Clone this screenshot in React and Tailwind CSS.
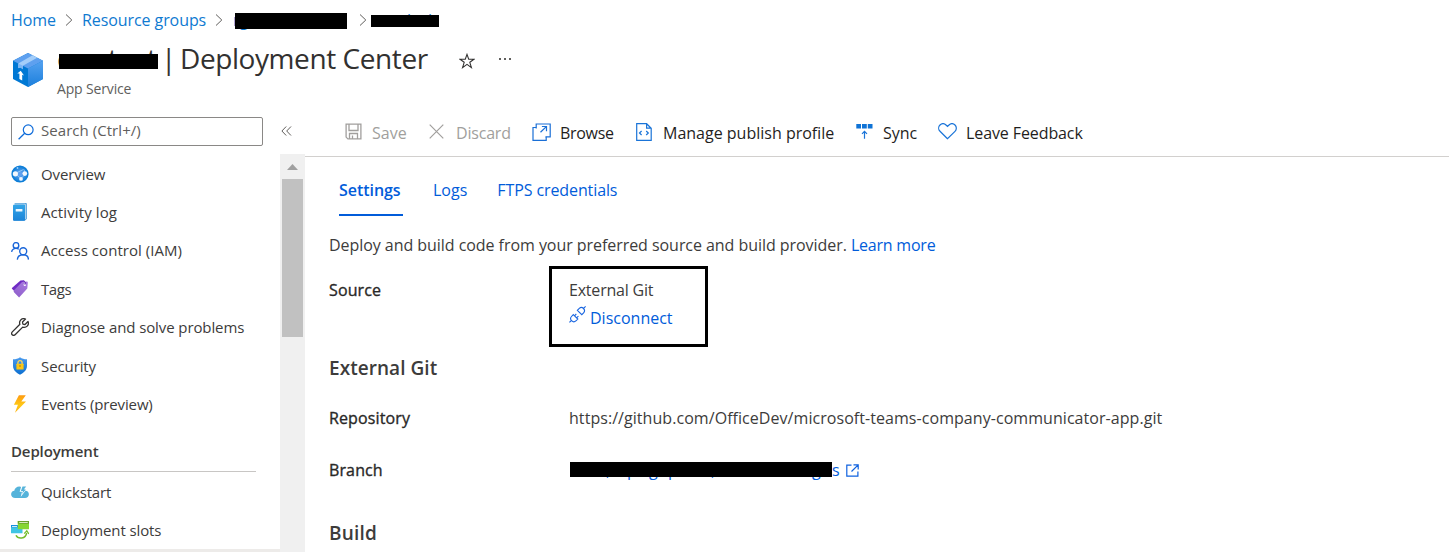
function Svg({ box = '0 0 18 18', className = 'h-[18px] w-[18px]', children }) {
  return (
    <svg viewBox={box} className={`block shrink-0 ${className}`} fill="none">
      {children}
    </svg>
  );
}

function ServiceIcon() {
  return (
    <Svg box="0 0 30 34" className="h-[34px] w-[30px]">
      <defs>
        <linearGradient id="boxRight" x1="0" y1="0" x2="0" y2="1">
          <stop offset="0" stopColor="#55a2f0" />
          <stop offset="1" stopColor="#1b7fdc" />
        </linearGradient>
      </defs>
      <path d="M15 0 30 7.7V26L15 34 0 26V7.7Z" fill="#0078d4" />
      <path d="M30 7.7V26L15 34V15.4Z" fill="url(#boxRight)" />
      <path d="M15 0 30 7.7 15 15.4 0 7.7Z" fill="#5ea0ef" />
      <path d="M19.6 2.3 24.2 4.7 9.9 12.7 9.7 16.3 7.6 14.4 5.3 15 5.3 10.4Z" fill="#a3cdf9" />
      <path d="M5.3 10.4 9.9 12.7V16.3L7.6 14.6 5.3 15.3Z" fill="#7db6f5" />
      <path d="M7.7 17.8 11 22.4 9.2 21.8V27.5L6.4 26V20.6L4.3 20.6Z" fill="#fff" />
    </Svg>
  );
}

function StarIcon() {
  return (
    <Svg box="0 0 16 16" className="h-4 w-4">
      <path d="M8 1.4 9.7 6.2H15L10.8 9.3 12.4 14.6 8 11.4 3.6 14.6 5.2 9.3 1 6.2H6.3Z" stroke="#323130" strokeWidth="1.1" />
    </Svg>
  );
}

function ChevronIcon() {
  return (
    <Svg box="0 0 8 14" className="h-[14px] w-2">
      <path d="M1 1.5 6.8 7 1 12.5" stroke="#605e5c" strokeWidth="1" />
    </Svg>
  );
}

function SearchIcon() {
  return (
    <Svg box="0 0 16 16" className="h-4 w-4">
      <circle cx="10.2" cy="5.8" r="4.9" stroke="#0f6cda" strokeWidth="1.2" />
      <path d="M6.7 9.3.6 15.2" stroke="#0f6cda" strokeWidth="1.3" />
    </Svg>
  );
}

function OverviewIcon() {
  return (
    <Svg>
      <defs>
        <radialGradient id="globe">
          <stop offset="0.2" stopColor="#5ea0ef" />
          <stop offset="1" stopColor="#0078d4" />
        </radialGradient>
      </defs>
      <circle cx="9" cy="9" r="8.6" fill="url(#globe)" />
      <path d="M4 8.5 12.5 4.5M4 8.5 10 13.5M13 4.5 14.5 9 10 13.5" stroke="#9fd0fa" strokeWidth="0.8" />
      <circle cx="4.4" cy="8.8" r="2.6" fill="#f2f7fd" />
      <circle cx="13.8" cy="8.6" r="2.4" fill="#f2f7fd" />
      <circle cx="10" cy="13.9" r="1.9" fill="#f2f7fd" />
      <circle cx="6.5" cy="3" r="0.9" fill="#9fd0fa" />
    </Svg>
  );
}

function LogIcon() {
  return (
    <Svg>
      <defs>
        <linearGradient id="book" x1="0" y1="0" x2="0" y2="1">
          <stop offset="0" stopColor="#32a5e8" />
          <stop offset="1" stopColor="#1b84d8" />
        </linearGradient>
      </defs>
      <path d="M3.6.2H15.6V16L14 17.6H3Z" fill="#0f7acb" />
      <path d="M3 1.2H14.3V16.4" stroke="#e7f4fd" strokeWidth="0.9" />
      <rect x="2" y="1.7" width="11.9" height="16" rx="0.7" fill="url(#book)" />
      <rect x="4.7" y="6" width="6.7" height="2.6" rx="0.4" fill="#eef7fe" />
    </Svg>
  );
}

function AccessIcon() {
  return (
    <Svg>
      <g stroke="#1a66d9" strokeWidth="1.4">
        <circle cx="5" cy="3.4" r="2.8" />
        <path d="M.6 9.8C1.2 7.6 2.8 6.4 5 6.4 6.2 6.4 7 6.7 7.8 7.3" />
        <circle cx="12.2" cy="9.2" r="3.5" />
        <path d="M6.3 17.6C6.7 14.5 9 12.8 12.2 12.8 15.4 12.8 17.3 14.5 17.5 17.6" />
      </g>
    </Svg>
  );
}

function TagIcon() {
  return (
    <Svg>
      <defs>
        <linearGradient id="tag" x1="1" y1="0" x2="0.2" y2="1">
          <stop offset="0" stopColor="#a97be0" />
          <stop offset="1" stopColor="#8f5fcb" />
        </linearGradient>
      </defs>
      <path d="M9.5.6 13.3.2 12.8 2 3.8 11.5.9 8.8Q.7 8.2 1.2 7.7Z" fill="#6f2bc4" />
      <path d="M11 1.9 15.9 1.6Q16.9 1.7 16.8 2.8L16.3 8.5 8.1 17.5 3 12.2Q2.3 11.2 3 10.3Z" fill="url(#tag)" />
      <circle cx="13.8" cy="4.7" r="1.2" fill="#fff" />
      <path d="M13 .8Q15.5 2.5 13.9 4.8" stroke="#5b1fa8" strokeWidth="0.9" />
    </Svg>
  );
}

function WrenchIcon() {
  return (
    <Svg>
      <path d="M14.5 1C12.7.3 10.6.8 9.4 2.3 8.5 3.5 8.4 5 8.9 6.3L1.3 13.9C.4 14.8.4 16 1.2 16.8 2 17.6 3.2 17.6 4.1 16.7L11.7 9.1C13.2 9.6 15 9.3 16.2 8.1 17.4 6.9 17.7 5 17 3.5L14 6.5 11.9 6.1 11.5 4Z" stroke="#323130" strokeWidth="1.3" strokeLinejoin="round" />
    </Svg>
  );
}

function ShieldIcon() {
  return (
    <Svg>
      <defs>
        <linearGradient id="shield" x1="0" y1="0" x2="0" y2="1">
          <stop offset="0" stopColor="#4a9bee" />
          <stop offset="1" stopColor="#0b6fd0" />
        </linearGradient>
      </defs>
      <path d="M9 .2C11 1.6 13 2.2 16 2.3V8.8C16 13.5 12.5 15.8 9 17.8 5.5 15.8 2 13.5 2 8.8V2.3C5 2.2 7 1.6 9 .2Z" fill="url(#shield)" />
      <path d="M6.9 7V5.7C6.9 3 11.1 3 11.1 5.7V7" stroke="#ffd75a" strokeWidth="1.3" />
      <rect x="5.4" y="6.7" width="7.2" height="5.8" rx="0.5" fill="#fbc615" />
      <circle cx="9" cy="9" r="0.8" fill="#a5740a" />
    </Svg>
  );
}

function BoltIcon() {
  return (
    <Svg>
      <defs>
        <linearGradient id="bolt" x1="0" y1="0" x2="0" y2="1">
          <stop offset="0" stopColor="#fe9a11" />
          <stop offset="0.55" stopColor="#ffc814" />
          <stop offset="1" stopColor="#fdb414" />
        </linearGradient>
      </defs>
      <path d="M7.9.2H14.8L10.3 6.4H15L4 17.8 6.9 9.8H2.9Z" fill="url(#bolt)" />
    </Svg>
  );
}

function QuickstartIcon() {
  return (
    <Svg>
      <path d="M4.2 15C1.8 15 .1 13.5.1 11.3.1 9.3 1.5 7.9 3.3 7.7 3.6 5 5.8 3.4 8.3 3.4 10 3.4 11.2 4.1 12 5.3L14.5 7.7C16.6 7.9 17.9 9.3 17.9 11.3 17.9 13.5 16.3 15 14 15Z" fill="#55b3da" />
      <path d="M10.3 3.3 8.6 8.8H11L9.7 14 14.6 7.4H12.4L15.6 3.3Z" fill="#fff" />
      <path d="M11.5 3.6H15.2L12.8 6.6H14.8L10.9 11 12 8H9.9Z" fill="#55b3da" />
    </Svg>
  );
}

function SlotsIcon() {
  return (
    <Svg>
      <rect x="0" y="4" width="11.5" height="8.3" rx="0.4" fill="#3fc4e4" />
      <rect x="0" y="4" width="7" height="2.3" fill="#1490df" />
      <rect x="1" y="5" width="5" height="0.8" fill="#fff" />
      <rect x="6.8" y="0" width="11.2" height="8.3" rx="0.4" fill="#86d633" />
      <rect x="6.8" y="0" width="11.2" height="2.7" fill="#6a9f2b" />
      <rect x="8.2" y="1" width="8.6" height="0.9" fill="#e4f4d2" />
      <path d="M5 14.3C6.8 18.2 14.9 18.3 15.6 11.8" stroke="#76bc2d" strokeWidth="1.5" />
      <path d="M13.2 12.6 15.8 9.8 17.9 13" stroke="#76bc2d" strokeWidth="1.2" />
    </Svg>
  );
}

function SaveIcon() {
  return (
    <Svg box="0 0 17 17" className="mb-1 h-[17px] w-[17px]">
      <path d="M1.1 1.1H15.9V15.9H2.9L1.1 14.1ZM4 1.1V7.5H13V1.1M4.5 15.9V10.5H12.5V15.9M7.5 12.5V15.9" stroke="#a19f9d" strokeWidth="1.3" />
    </Svg>
  );
}

function DiscardIcon() {
  return (
    <Svg box="0 0 15 15" className="mb-1 h-[15px] w-[15px]">
      <path d="M.7.7 14.3 14.3M14.3.7.7 14.3" stroke="#a19f9d" strokeWidth="1.2" />
    </Svg>
  );
}

function BrowseIcon() {
  return (
    <Svg box="0 0 19 18" className="mb-[3px] h-[18px] w-[19px]">
      <g stroke="#1a6fd6" strokeWidth="1.2">
        <path d="M4.2 4.5H1V17.3H14.2V13.8" />
        <path d="M8.5 9.3V3.5H4.2V13.8M4.2 3.5V1H8.5M8.5 .4V3.5M8.5 1H18.2V13.8H13.5" strokeWidth="0" />
        <path d="M4.2 5.5V1H18.2V13.8H13.5" />
        <path d="M8.5 9.3 14.3 3.6M9.9 3.5H14.5V8.2" />
      </g>
    </Svg>
  );
}

function ProfileIcon() {
  return (
    <Svg box="0 0 16 18" className="mb-[3px] h-[18px] w-4">
      <path d="M.7.7H10.6L15.2 5.2V17.3H.7ZM10.6.7V5.2H15.2" stroke="#1a74d8" strokeWidth="1.2" />
      <path d="M5.6 8 3.5 10 5.6 12M10.2 8 12.3 10 10.2 12" stroke="#1a74d8" strokeWidth="1.2" />
    </Svg>
  );
}

function SyncIcon() {
  return (
    <Svg box="0 0 17 16" className="mb-1 h-4 w-[17px]">
      <path d="M.3 1H5V5.5H.3ZM6 1H10.8V5.5H6ZM11.8 1H16.5V5.5H11.8Z" fill="#0f73d6" />
      <path d="M8.5 15.8V8.6M6 10.8 8.5 8.3 11 10.8" stroke="#1a74d8" strokeWidth="1.2" />
    </Svg>
  );
}

function HeartIcon() {
  return (
    <Svg box="0 0 19 17" className="mb-1 h-[17px] w-[19px]">
      <path d="M9.5 15.7 2 8.3C.2 6.5.3 3.7 2 2 3.7.4 6.3.4 8 2L9.5 3.5 11 2C12.7.4 15.3.4 17 2 18.7 3.7 18.8 6.5 17 8.3Z" stroke="#1a74d8" strokeWidth="1.2" />
    </Svg>
  );
}

function PlugIcon() {
  return (
    <Svg box="0 0 17 17" className="h-[17px] w-[17px]">
      <g stroke="#1a66e0" strokeWidth="1.1">
        <path d="M.4 16.4 2.4 14.5M4.3 8.6 8.8 13.1 6.9 14.9C5.7 16 3.8 15.9 2.6 14.7 1.4 13.5 1.4 11.7 2.5 10.5ZM5.5 9.8 7.3 8M7.6 11.9 9.4 10.1" />
        <path d="M16.6.4 14.6 2.4M8.4 4.3 12.8 8.7 14.6 6.8C15.7 5.6 15.7 3.7 14.5 2.5 13.3 1.3 11.5 1.3 10.3 2.4Z" />
      </g>
    </Svg>
  );
}

function ExternalIcon() {
  return (
    <Svg box="0 0 13 13" className="h-[13px] w-[13px]">
      <path d="M5.5 1.1H.8V12.2H11.9V7.5M7.5.8H12.2V5.5M12.2.8 5.5 7.5" stroke="#0f62e0" strokeWidth="1.2" />
    </Svg>
  );
}

const navItems = [
  { label: 'Overview', Icon: OverviewIcon, text: 'tracking-[-0.1px]' },
  { label: 'Activity log', Icon: LogIcon, text: 'tracking-[0.1px]' },
  { label: 'Access control (IAM)', Icon: AccessIcon, text: 'tracking-[0.05px]' },
  { label: 'Tags', Icon: TagIcon, text: 'tracking-[-0.4px]' },
  { label: 'Diagnose and solve problems', Icon: WrenchIcon, text: 'tracking-[-0.1px]' },
  { label: 'Security', Icon: ShieldIcon, text: 'tracking-[-0.1px]' },
  { label: 'Events (preview)', Icon: BoltIcon, text: 'tracking-[-0.13px]' },
];

const deploymentItems = [
  { label: 'Quickstart', Icon: QuickstartIcon, text: 'tracking-[-0.2px]' },
  { label: 'Deployment slots', Icon: SlotsIcon, text: 'tracking-[-0.1px]' },
];

function NavItem({ label, Icon, text = '' }) {
  return (
    <li className="flex h-[38.4px] items-center gap-3 pl-[11px]">
      <Icon />
      <span className={`text-[15px] ${text}`}>{label}</span>
    </li>
  );
}

function Sidebar() {
  return (
    <aside className="flex w-[305px] shrink-0 flex-col">
      <div className="flex h-[44px] shrink-0 items-start pt-[7px] pl-[11px]">
        <div className="flex h-[29px] w-[252px] items-center gap-[7px] rounded-[2px] border border-[#8a8886] pl-1.5">
          <SearchIcon />
          <span className="mb-0.5 text-[15px] tracking-[0.05px] text-[#605e5c]">Search (Ctrl+/)</span>
        </div>
        <Svg box="0 0 11 10" className="mt-[9px] ml-[18px] h-2.5 w-[11px]">
          <path d="M5.2.5.9 5 5.2 9.5M10 .5 5.7 5 10 9.5" stroke="#605e5c" strokeWidth="1" />
        </Svg>
      </div>
      <div className="flex min-h-0 flex-1">
        <div className="flex w-[280px] flex-col overflow-hidden border-b-[3px] border-[#edebe9] pt-[0.65px]">
          <ul>
            {navItems.map((item) => (
              <NavItem key={item.label} {...item} />
            ))}
          </ul>
          <h2 className="mr-6 ml-[11px] flex h-[48.4px] shrink-0 items-center border-b border-[#c8c6c4] pt-[8.4px] text-[15px] font-semibold tracking-[-0.13px]">
            Deployment
          </h2>
          <ul className="pt-px">
            {deploymentItems.map((item) => (
              <NavItem key={item.label} {...item} />
            ))}
          </ul>
        </div>
        <div className="flex w-[25px] flex-col items-center bg-[#f0f0f0] pt-[10px]">
          <Svg box="0 0 11 6" className="h-1.5 w-[11px]">
            <path d="M0 6 5.5 0 11 6Z" fill="#a0a0a0" />
          </Svg>
          <div className="mt-[9px] h-[158px] w-[21px] bg-[#c1c1c1]" />
        </div>
      </div>
    </aside>
  );
}

function Toolbar() {
  return (
    <div className="flex h-[47px] shrink-0 items-center border-b border-[#d2d0ce] text-[16px] text-[#1f1e1d]">
      <div className="flex w-[84px] items-center gap-[10px] pl-10 text-[#a19f9d]">
        <SaveIcon />
        <span>Save</span>
      </div>
      <div className="ml-10 flex w-[103px] items-center gap-3 text-[#a19f9d]">
        <DiscardIcon />
        <span className="tracking-[-0.2px]">Discard</span>
      </div>
      <div className="flex w-[104px] items-center gap-[9px]">
        <BrowseIcon />
        <span className="tracking-[-0.3px]">Browse</span>
      </div>
      <div className="flex w-[220px] items-center gap-[11px]">
        <ProfileIcon />
        <span>Manage publish profile</span>
      </div>
      <div className="flex w-[82px] items-center gap-[10px]">
        <SyncIcon />
        <span>Sync</span>
      </div>
      <div className="flex items-center gap-[9px]">
        <HeartIcon />
        <span className="tracking-[-0.1px]">Leave Feedback</span>
      </div>
    </div>
  );
}

function Tabs() {
  return (
    <div className="flex h-[59px] shrink-0 items-stretch gap-[30px] pl-[34px] text-[16px] leading-[66px] text-[#015cda]">
      <span className="w-16 border-b-2 border-[#015cda] font-semibold tracking-[-0.05px]">Settings</span>
      <span>Logs</span>
      <span className="tracking-[-0.1px]">FTPS credentials</span>
    </div>
  );
}

function Label({ children }) {
  return (
    <div className="w-60 shrink-0 tracking-[0.12px] text-[#292827] [-webkit-text-stroke:0.35px_#292827]">{children}</div>
  );
}

function BranchLink() {
  return (
    <span className="flex items-center gap-[6px] text-[#015cda]">
      <span className="relative flex">
        <span className="w-[37px]" />
        <span className="w-[21px]">,</span>
        <span className="w-[22px]">p</span>
        <span className="w-[19px]">g</span>
        <span className="w-[43px]">p</span>
        <span className="w-[101px]">,</span>
        <span className="w-[20px]">g</span>
        <span className="w-2">s</span>
        <span className="absolute top-1 left-px h-[15px] w-[262px] bg-black" />
      </span>
      <ExternalIcon />
    </span>
  );
}

function Content() {
  return (
    <div className="flex flex-col pl-6 text-[16px] leading-6 text-[#3d3c3b]">
      <p className="mt-[17px] tracking-[-0.05px]">
        Deploy and build code from your preferred source and build provider.{' '}
        <a className="tracking-[-0.22px] text-[#015cda]">Learn more</a>
      </p>
      <div className="mt-[9px] flex h-[81px]">
        <div className="pt-3">
          <Label>Source</Label>
        </div>
        <div className="-ml-5 flex w-[159px] flex-col gap-1 border-[3px] border-black pt-[9px] pl-[17px]">
          <span className="tracking-[-0.2px]">External Git</span>
          <a className="flex items-start gap-1 text-[#015cda]">
            <PlugIcon />
            <span>Disconnect</span>
          </a>
        </div>
      </div>
      <h3 className="mt-[9px] text-[19px] font-semibold tracking-[0.05px]">External Git</h3>
      <div className="mt-[26px] flex">
        <Label>Repository</Label>
        <span className="tracking-[0.055px]">https://github.com/OfficeDev/microsoft-teams-company-communicator-app.git</span>
      </div>
      <div className="mt-7 flex">
        <Label>Branch</Label>
        <BranchLink />
      </div>
      <h3 className="mt-[39px] text-[19px] font-semibold tracking-[0.2px]">Build</h3>
    </div>
  );
}

function Breadcrumbs() {
  return (
    <nav className="flex h-10 shrink-0 items-center pl-[11px] text-[16px] tracking-[-0.08px] text-[#0f7ad1]">
      <a className="w-[54px]">Home</a>
      <ChevronIcon />
      <a className="ml-[9px] w-[133px]">Resource groups</a>
      <ChevronIcon />
      <a className="relative ml-[10px] w-[126px]">
        rg
        <span className="absolute top-[5px] left-[2px] h-4 w-28 bg-black" />
      </a>
      <ChevronIcon />
      <a className="relative ml-[2px] flex">
        <span className="w-[38px]" />
        <span className="w-[21px]">l</span>
        <span>l</span>
        <span className="absolute top-[7px] left-[2px] h-3 w-[68px] bg-black" />
      </a>
    </nav>
  );
}

function Header() {
  return (
    <header className="flex h-[70px] shrink-0 pl-[13px]">
      <div className="pt-[13px]">
        <ServiceIcon />
      </div>
      <div className="ml-[14px] flex flex-col">
        <div className="flex h-[38px] items-center">
          <h1 className="mb-[2px] flex text-[28px] leading-[38px] tracking-[-0.42px] text-[#323130]">
            <span className="relative flex w-[104px]">
              <span className="w-[51px]">c</span>
              <span className="w-[39px]">t</span>
              <span>t</span>
              <span className="absolute top-[15px] left-[2px] h-[15px] w-[99px] bg-black" />
            </span>
            <span className="w-[19px]">|</span>
            <span>Deployment Center</span>
          </h1>
          <div className="mt-[3px] ml-[31px]">
            <StarIcon />
          </div>
          <div className="ml-6 flex gap-[3px]">
            <span className="size-0.5 bg-[#605e5c]" />
            <span className="size-0.5 bg-[#605e5c]" />
            <span className="size-0.5 bg-[#605e5c]" />
          </div>
        </div>
        <p className="text-[14px] leading-[22px] tracking-[-0.15px] text-[#605e5c]">App Service</p>
      </div>
    </header>
  );
}

export default function App() {
  return (
    <div className="flex h-[552px] w-[1449px] flex-col overflow-hidden bg-white font-['Open_Sans','Noto_Sans',sans-serif] text-[#3d3c3b]">
      <Breadcrumbs />
      <Header />
      <div className="flex min-h-0 flex-1">
        <Sidebar />
        <main className="flex flex-1 flex-col">
          <Toolbar />
          <Tabs />
          <Content />
        </main>
      </div>
    </div>
  );
}
